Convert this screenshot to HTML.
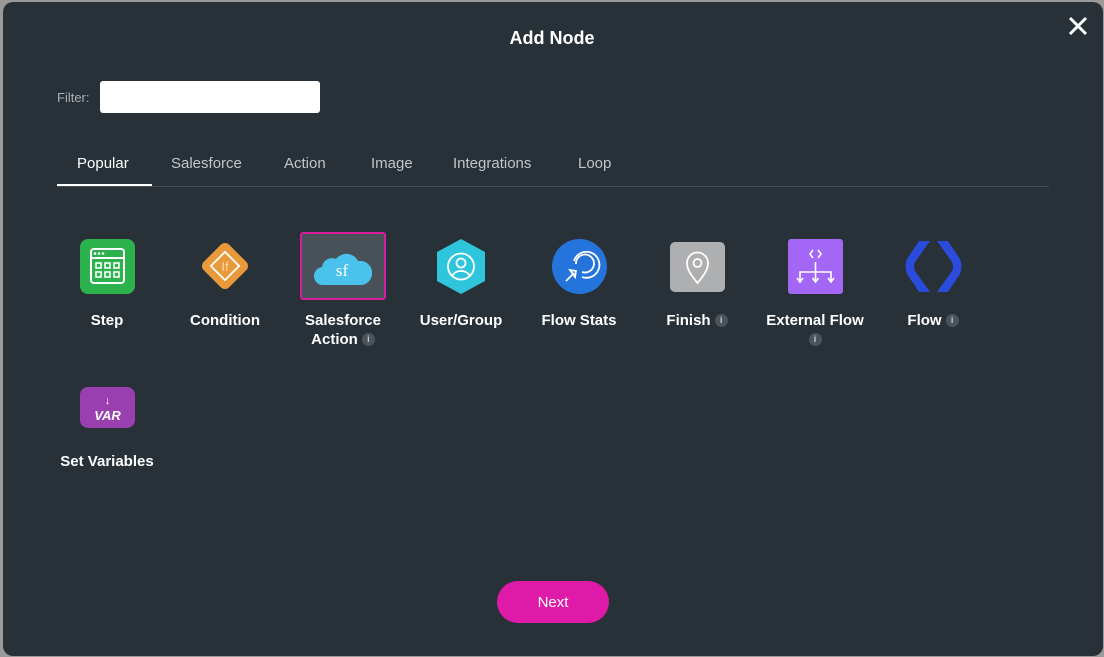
<!DOCTYPE html>
<html><head><style>
body{margin:0;width:1104px;height:657px;background:#9a9a9a;font-family:"Liberation Sans",sans-serif;overflow:hidden}
.dlg{position:absolute;left:3px;top:2px;width:1100px;height:654px;background:#283137;border-radius:10px}
.t{position:absolute;left:0;width:1104px;top:28px;text-align:center;color:#fff;font-weight:bold;font-size:18px}
.x{position:absolute;left:1066px;top:14px}
.fl{position:absolute;left:57px;top:90px;color:#aab0b4;font-size:13px}
.in{position:absolute;left:100px;top:81px;width:220px;height:32px;background:#fff;border-radius:3px}
.tabs{position:absolute;left:57px;top:155px;font-size:15px;color:#c2c6c9}
.tabs span{position:absolute;white-space:nowrap}
.line{position:absolute;left:57px;top:186px;width:992px;height:1px;background:#464f55}
.ul{position:absolute;left:57px;top:184px;width:95px;height:2px;background:#fff}
.it{position:absolute;width:118px;text-align:center;color:#fff;font-weight:bold;font-size:15px;line-height:19px}
.ic{position:absolute}
.i{display:inline-block;width:13px;height:13px;border-radius:50%;background:#4b545a;color:#ccc;font-size:9px;line-height:13px;text-align:center;vertical-align:2px;margin-left:4px;font-weight:bold}
.nx{position:absolute;left:497px;top:581px;width:112px;height:42px;border-radius:21px;background:#e01aa8;color:#fff;font-size:15px;text-align:center;line-height:44px}
</style></head><body>
<div class="dlg"></div>
<div class="t">Add Node</div>
<svg class="x" width="24" height="24"><path d="M4 4L20 20M20 4L4 20" stroke="#fff" stroke-width="3"/></svg>
<div class="fl">Filter:</div><div class="in"></div>
<div class="tabs">
<span style="left:20px;color:#fff">Popular</span><span style="left:114px">Salesforce</span><span style="left:227px">Action</span><span style="left:314px">Image</span><span style="left:396px">Integrations</span><span style="left:521px">Loop</span></div>
<div class="line"></div><div class="ul"></div>

<svg class="ic" style="left:80px;top:239px" width="55" height="55"><rect width="55" height="55" rx="8" fill="#2bb24c"/><rect x="11" y="10" width="33" height="34" rx="3" fill="none" stroke="#fff" stroke-width="2"/><line x1="11" y1="19" x2="44" y2="19" stroke="#fff" stroke-width="2"/><g fill="#fff"><circle cx="15" cy="14.5" r="1.3"/><circle cx="19" cy="14.5" r="1.3"/><circle cx="23" cy="14.5" r="1.3"/></g><g fill="none" stroke="#fff" stroke-width="1.6"><rect x="16" y="24" width="5" height="5"/><rect x="25" y="24" width="5" height="5"/><rect x="34" y="24" width="5" height="5"/><rect x="16" y="33" width="5" height="5"/><rect x="25" y="33" width="5" height="5"/><rect x="34" y="33" width="5" height="5"/></g></svg>
<svg class="ic" style="left:201px;top:242px" width="48" height="48"><rect x="6" y="6" width="36" height="36" rx="6" fill="#e8993a" transform="rotate(45 24 24)"/><rect x="14" y="14" width="20" height="20" fill="none" stroke="#fff" stroke-width="1.8" transform="rotate(45 24 24)"/><text x="24" y="29" text-anchor="middle" fill="#f7d9a8" font-size="13" font-family="Liberation Sans">If</text></svg>
<div class="ic" style="left:300px;top:232px;width:82px;height:64px;border:2px solid #d61d9e;border-radius:3px;background:#475157"></div>
<svg class="ic" style="left:314px;top:247px" width="58" height="40"><path d="M10 38 A9 9 0 0 1 8 20 A10 10 0 0 1 22 12 A13 13 0 0 1 44 14 A10 10 0 0 1 48 38 Z" fill="#4bc2ee"/><text x="28" y="29" text-anchor="middle" fill="#fff" font-size="17" font-family="Liberation Serif">sf</text></svg>
<svg class="ic" style="left:436px;top:238px" width="50" height="57"><path d="M25 1L49 14V43L25 56L1 43V14Z" fill="#2ec5dd"/><circle cx="25" cy="28.5" r="13" fill="none" stroke="#fff" stroke-width="1.8"/><circle cx="25" cy="25" r="4.5" fill="none" stroke="#fff" stroke-width="1.8"/><path d="M16 38 A10 9 0 0 1 34 38" fill="none" stroke="#fff" stroke-width="1.8"/></svg>
<svg class="ic" style="left:552px;top:239px" width="55" height="55"><circle cx="27.5" cy="27.5" r="27.5" fill="#2474dc"/><path d="M24 25 A9 9 0 1 1 30 33 M22 22 A13 13 0 1 1 30 38" fill="none" stroke="#fff" stroke-width="1.8"/><path d="M14 42L22 34M18 31L24 32L23 38Z" fill="none" stroke="#fff" stroke-width="1.8"/></svg>
<svg class="ic" style="left:670px;top:242px" width="55" height="50"><rect width="55" height="50" rx="5" fill="#aeafb1"/><path d="M27.5 41 C20 32 17 27 17 21 A10.5 10.5 0 0 1 38 21 C38 27 35 32 27.5 41Z" fill="none" stroke="#fff" stroke-width="1.8"/><circle cx="27.5" cy="21" r="4" fill="none" stroke="#fff" stroke-width="1.8"/></svg>
<svg class="ic" style="left:788px;top:239px" width="55" height="55"><rect width="55" height="55" rx="3" fill="#a366f5"/><g fill="none" stroke="#fff" stroke-width="1.6"><path d="M25 11L22 15L25 19M30 11L33 15L30 19M27.5 23V42M12 42V33H43V42M9 39L12 43L15 39M24.5 39L27.5 43L30.5 39M40 39L43 43L46 39"/></g></svg>
<svg class="ic" style="left:905px;top:240px" width="57" height="53"><path d="M14 1H25L10 22Q8 26.5 10 31L25 52H14L2 34Q-1 26.5 2 19Z" fill="#2a4bdb"/><path d="M43 1H32L47 22Q49 26.5 47 31L32 52H43L55 34Q58 26.5 55 19Z" fill="#2a4bdb"/></svg>
<svg class="ic" style="left:80px;top:387px" width="55" height="41"><rect width="55" height="41" rx="8" fill="#9a3fb0"/><text x="27.5" y="17" text-anchor="middle" fill="#fff" font-size="11" font-weight="bold" font-family="Liberation Sans">↓</text><text x="27.5" y="33" text-anchor="middle" fill="#fff" font-size="13" font-weight="bold" font-style="italic" font-family="Liberation Sans">VAR</text></svg>

<div class="it" style="left:48px;top:311px">Step</div>
<div class="it" style="left:166px;top:311px">Condition</div>
<div class="it" style="left:284px;top:311px">Salesforce<br>Action<span class="i">i</span></div>
<div class="it" style="left:402px;top:311px">User/Group</div>
<div class="it" style="left:520px;top:311px">Flow Stats</div>
<div class="it" style="left:638px;top:311px">Finish<span class="i">i</span></div>
<div class="it" style="left:756px;top:311px">External Flow<br><span class="i" style="margin:0">i</span></div>
<div class="it" style="left:874px;top:311px">Flow<span class="i">i</span></div>
<div class="it" style="left:48px;top:452px">Set Variables</div>
<div class="nx">Next</div>
</body></html>
